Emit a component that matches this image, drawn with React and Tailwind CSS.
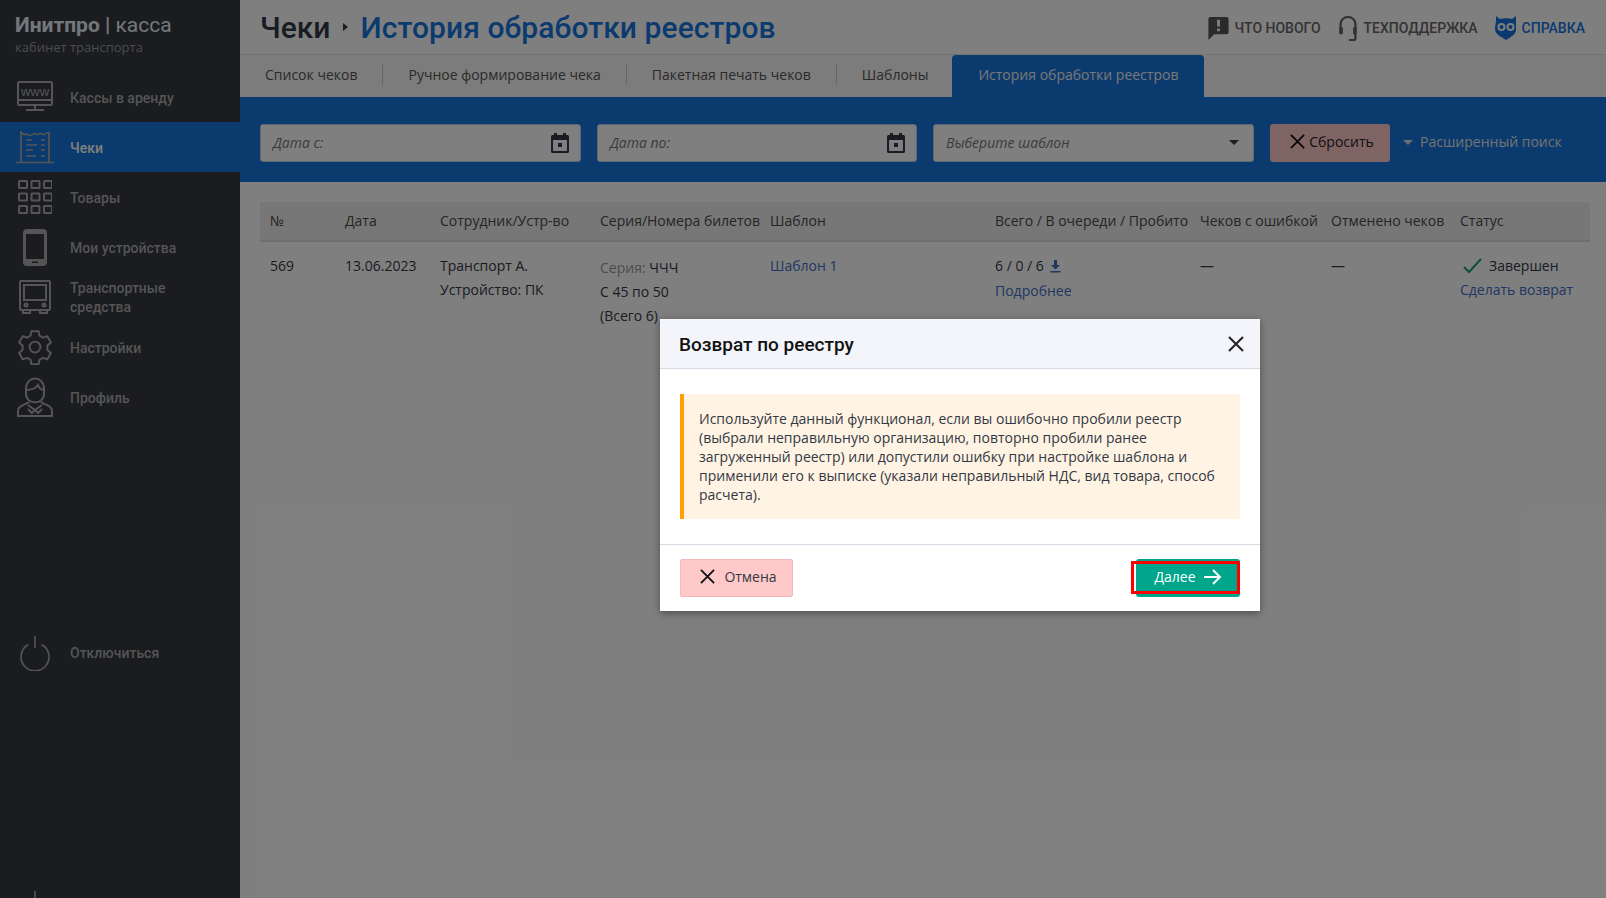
import React from "react";

const ic = { fill: "none", stroke: "#aaaaaa", strokeWidth: 2 };

const Www = () => (
  <svg width="36" height="32" viewBox="0 0 36 32" {...ic}>
    <rect x="1" y="1" width="34" height="23" rx="1" />
    <path d="M1 19h34M18 24v4M9 29h18" />
    <text x="18" y="14.500" textAnchor="middle" fontSize="13" fontFamily="'Liberation Sans',sans-serif" fill="#aaaaaa" stroke="none">www</text>
  </svg>
);
const Receipt = () => (
  <svg width="38" height="33" viewBox="0 0 38 33" fill="none" stroke="#aaaaaa" strokeWidth="1.700">
    <path d="M5 31V1c2 3 4 3 6 2 2 2 4 2 6 0s4 2 6 0 4 2 6 0 3 0 4-2v30" />
    <path d="M0 31.500h38" />
    <path d="M10 9h6M25 9h4M10 14h11M25 14h4M10 19h7M25 19h4M10 25h10M25 25h4" />
  </svg>
);
const Grid = () => (
  <svg width="34" height="34" viewBox="0 0 34 34" {...ic}>
    {[0, 12.5, 25].map((y) =>
      [0, 12.5, 25].map((x) => <rect key={`${x}-${y}`} x={x + 1} y={y + 1} width="8" height="7" rx="0.5" />)
    )}
  </svg>
);
const Phone = () => (
  <svg width="24" height="37" viewBox="0 0 24 37">
    <path fillRule="evenodd" fill="#aaaaaa" d="M4 0h16a4 4 0 0 1 4 4v29a4 4 0 0 1-4 4H4a4 4 0 0 1-4-4V4a4 4 0 0 1 4-4Zm-1 5v25h18V5ZM9 32.500v1.500h6v-1.500Z" />
  </svg>
);
const Bus = () => (
  <svg width="32" height="34" viewBox="0 0 32 34" {...ic}>
    <rect x="1" y="1" width="30" height="29" rx="1" />
    <rect x="5" y="5" width="22" height="15" />
    <circle cx="7" cy="25" r="1.500" />
    <circle cx="25" cy="25" r="1.500" />
    <path d="M4 30v3h7v-3M21 30v3h7v-3" />
  </svg>
);
const Gear = () => (
  <svg width="36" height="36" viewBox="0 0 24 24" fill="none" stroke="#aaaaaa" strokeWidth="1.300" strokeLinejoin="round">
    <path d="M9.600 1.500h4.800l.6 3 2.300 1.300 2.900-1 2.400 4.200-2.300 2v3l2.300 2-2.400 4.200-2.900-1-2.300 1.300-.6 3H9.600l-.6-3-2.300-1.300-2.900 1-2.400-4.200 2.300-2v-3l-2.300-2 2.400-4.200 2.900 1L9 4.500Z" />
    <circle cx="12" cy="12" r="3.600" />
  </svg>
);
const Person = () => (
  <svg width="36" height="40" viewBox="0 0 36 40" {...ic}>
    <path d="M9 12c0-14 18-14 18 0v5c0 11-18 11-18 0Z" />
    <path d="M9 13c5 0 10-2 12-5 1 3 3 5 6 5" />
    <path d="M12 25c-3 3-11 3-11 9v5h34v-5c0-6-8-6-11-9" />
    <path d="M11 28l7 5 7-5M18 33l-3 3-4-4M18 33l3 3 4-4" />
  </svg>
);
const Power = () => (
  <svg width="32" height="36" viewBox="0 0 32 36" fill="none" stroke="#aaaaaa" strokeWidth="1.600">
    <path d="M16 1v12M9.500 9.500a14 14 0 1 0 13 0" />
  </svg>
);
const Cal = () => (
  <svg width="18" height="20" viewBox="0 0 18 20">
    <path fillRule="evenodd" fill="#333845" d="M3 0h3v2h6V0h3v2h1.500A1.500 1.500 0 0 1 18 3.500v15a1.500 1.500 0 0 1-1.500 1.500h-15A1.500 1.500 0 0 1 0 18.500v-15A1.500 1.500 0 0 1 1.500 2H3Zm-1 7v11h14V7ZM7 10h4v4H7Z" />
  </svg>
);
const Cross = ({ s = 15, c = "#111111", w = 2 }) => (
  <svg width={s} height={s} viewBox="0 0 16 16" fill="none" stroke={c} strokeWidth={w}>
    <path d="M1 1l14 14M15 1L1 15" />
  </svg>
);

const menu = [
  ["Кассы в аренду", <Www />],
  ["Чеки", <Receipt />, true],
  ["Товары", <Grid />],
  ["Мои устройства", <Phone />],
  [<>Транспортные<br />средства</>, <Bus />],
  ["Настройки", <Gear />],
  ["Профиль", <Person />],
];

const tabs = ["Список чеков", "Ручное формирование чека", "Пакетная печать чеков", "Шаблоны"];

const cols = [
  ["№", "w-[75px]"],
  ["Дата", "w-[95px]"],
  ["Сотрудник/Устр-во", "w-[160px]"],
  ["Серия/Номера билетов", "w-[170px]"],
  ["Шаблон", "w-[225px]"],
  ["Всего / В очереди / Пробито", "w-[205px]"],
  ["Чеков с ошибкой", "w-[131px]"],
  ["Отменено чеков", "w-[129px]"],
  ["Статус", "w-[140px]"],
];

function Field({ label, icon, w = "w-[320px]" }) {
  return (
    <div className={`flex h-[38px] ${w} items-center justify-between rounded-[3px] border border-[#b9cfe8] bg-white pl-[12px] pr-[11px] italic text-[#777777]`}>
      <span>{label}</span>
      {icon}
    </div>
  );
}

export default function App() {
  return (
    <div className="relative flex h-screen overflow-hidden bg-white font-['Open_Sans',sans-serif] text-[14px] text-[#333845]">
      <aside className="flex w-[240px] shrink-0 flex-col overflow-hidden bg-[#34383f] font-['Roboto',sans-serif] font-medium text-[#aaaaaa]">
        <div className="h-[72px] shrink-0 pl-[15px] pt-[12px]">
          <div className="text-[21px] leading-[27px] font-normal text-[#e8eef5]">
            <span className="font-bold">Инитпро | </span>касса
          </div>
          <div className="mt-[-1px] font-['Open_Sans',sans-serif] text-[13px] leading-[18px] font-normal text-[#999999]">кабинет транспорта</div>
        </div>
        {menu.map(([label, icon, active], i) => (
          <div key={i} className={`flex h-[50px] shrink-0 items-center ${active ? "bg-[#1674dc] text-white" : ""}`}>
            <div className="flex w-[70px] shrink-0 justify-center">{icon}</div>
            <div className="pt-[2px] leading-[19px]">{label}</div>
          </div>
        ))}
        <div className="mt-[206px] flex h-[50px] shrink-0 items-center">
          <div className="flex w-[70px] shrink-0 justify-center"><Power /></div>
          <div>Отключиться</div>
        </div>
        <div className="mt-[205px] flex h-[50px] shrink-0 items-center">
          <div className="flex w-[70px] shrink-0 justify-center"><Power /></div>
        </div>
      </aside>

      <main className="min-w-0 flex-1">
        <header className="flex h-[55px] items-center justify-between border-b border-[#e6e6e6] pl-[20px] pr-[21px] font-['Roboto',sans-serif]">
          <div className="flex items-center text-[30px] font-medium">
            <span>Чеки</span>
            <span className="ml-[12px] mr-[13px] h-0 w-0 border-y-[4px] border-l-[5px] border-y-transparent border-l-[#333845]" />
            <span className="tracking-[0.08px] text-[#1674dc]">История обработки реестров</span>
          </div>
          <div className="flex items-center pt-[1px] text-[14px] font-medium uppercase">
            <svg width="21" height="24" viewBox="0 0 21 25" className="mr-[6px]">
              <path fillRule="evenodd" fill="#555555" d="M2 1h17a2 2 0 0 1 2 2v14a2 2 0 0 1-2 2H6l-6 6V3a2 2 0 0 1 2-2Zm7 3v7h3V4Zm0 9v3h3v-3Z" />
            </svg>
            <span className="pt-[1px] text-[#666666]">Что нового</span>
            <svg width="20" height="26" viewBox="0 0 20 28" fill="none" stroke="#666666" strokeWidth="2.500" className="ml-[17px] mr-[6px]">
              <path d="M2 15V10a8 8 0 0 1 16 0v5M18 20v5a2 2 0 0 1-2 2h-5" />
              <rect x="0.500" y="13" width="4" height="8" rx="1.500" fill="#666666" stroke="none" />
              <rect x="15.500" y="13" width="4" height="8" rx="1.500" fill="#666666" stroke="none" />
            </svg>
            <span className="pt-[1px] text-[#666666]">Техподдержка</span>
            <svg width="22" height="24" viewBox="0 0 22 24" className="ml-[17px] mr-[5px]">
              <path fill="#1674dc" d="M1 0l4 3c3-1 9-1 12 0l4-3v14c0 5-6 7-10 10C7 21 0 19 0 13 0 9 1 7 1 5Z" />
              <circle cx="6.500" cy="11" r="4" fill="#fff" /><circle cx="15.500" cy="11" r="4" fill="#fff" />
              <circle cx="6.500" cy="11" r="2" fill="#1674dc" /><circle cx="15.500" cy="11" r="2" fill="#1674dc" />
            </svg>
            <span className="pt-[1px] text-[#1674dc]">Справка</span>
          </div>
        </header>

        <nav className="flex h-[42px] items-stretch bg-[#f8f8f8]">
          {tabs.map((t, i) => (
            <div key={t} className="flex items-center pb-[3px]">
              <span className="px-[25px] text-[#555555]">{t}</span>
              {i < 3 && <span className="h-[21px] w-px bg-[#cccccc]" />}
            </div>
          ))}
          <div className="ml-[-1px] flex w-[252px] items-center justify-center rounded-t-[4px] bg-[#1674dc] pb-[3px] text-[#f0f0f0]">История обработки реестров</div>
        </nav>

        <section className="flex h-[85px] items-center bg-[#1674dc] pl-[20px] pt-[6px]">
          <Field w="w-[321px]" label="Дата с:" icon={<Cal />} />
          <div className="ml-[16px]"><Field label="Дата по:" icon={<Cal />} /></div>
          <div className="ml-[16px]">
            <Field w="w-[321px]" label="Выберите шаблон" icon={<span className="mr-[3px] h-0 w-0 border-x-[5px] border-t-[5px] border-x-transparent border-t-[#333845]" />} />
          </div>
          <button className="ml-[16px] flex h-[38px] w-[120px] items-center justify-center gap-[4px] rounded-[3px] bg-[#ffc9c9] pb-[2px] pl-[4px] text-[#222222]">
            <Cross s={15} />
            <span>Сбросить</span>
          </button>
          <span className="ml-[13px] mr-[7px] h-0 w-0 border-x-[5px] border-t-[5px] border-x-transparent border-t-[#dddddd]" />
          <span className="pb-[2px] text-[#e6e6e6]">Расширенный поиск</span>
        </section>

        <div className="pl-[20px] pr-[16px] pt-[20px]">
          <table className="w-[1330px] table-fixed border-collapse text-left">
            <thead>
              <tr className="h-[39px] border-b-2 border-[#dcdcdc] bg-[#eeeeee]">
                {cols.map(([c, w]) => (
                  <th key={c} className={`${w} pb-[2px] pl-[10px] font-normal whitespace-nowrap text-[#4a4a4a]`}>{c}</th>
                ))}
              </tr>
            </thead>
            <tbody className="align-top leading-[24px]">
              <tr>
                <td className="pl-[10px] pt-[12px]">569</td>
                <td className="pl-[10px] pt-[12px]">13.06.2023</td>
                <td className="pl-[10px] pt-[12px]">Транспорт А.<br />Устройство: ПК</td>
                <td className="pl-[10px] pt-[14px]"><span className="text-[#999999]">Серия:</span> ЧЧЧ<br />С 45 по 50<br />(Всего 6)</td>
                <td className="pl-[10px] pt-[12px] text-[#3f6fc4]">Шаблон 1</td>
                <td className="pl-[10px] pt-[12px]">
                  <div className="flex items-center gap-[6px]">6 / 0 / 6
                    <svg width="11" height="13" viewBox="0 0 11 13"><path fill="#3f6fc4" d="M4 0h3v5h3L5.500 9.500 1 5h3ZM0.500 11h10v1.500H.5Z" /></svg>
                  </div>
                  <div className="mt-[1px] text-[#3f6fc4]">Подробнее</div>
                </td>
                <td className="pl-[10px] pt-[12px]">—</td>
                <td className="pl-[10px] pt-[12px]">—</td>
                <td className="pl-[10px] pt-[12px] whitespace-nowrap">
                  <div className="flex items-center gap-[7px] pl-[3px]">
                    <svg width="19" height="16" viewBox="0 0 19 16" fill="none" stroke="#11a07f" strokeWidth="2"><path d="M1 9l5 5L18 1" /></svg>
                    Завершен
                  </div>
                  <div className="text-[#3f6fc4]">Сделать возврат</div>
                </td>
              </tr>
            </tbody>
          </table>
        </div>
      </main>

      <div className="absolute inset-0 bg-black/50" />

      <div className="absolute left-[660px] top-[319px] w-[600px] bg-white shadow-[0_2px_8px_rgba(0,0,0,0.4)]">
        <div className="flex h-[50px] items-center justify-between border-b border-[#d9d9e5] bg-[#f3f5fa] pl-[19px] pr-[16px]">
          <span className="pt-[3px] font-['Roboto',sans-serif] text-[19px] font-medium text-[#111111]">Возврат по реестру</span>
          <Cross s={16} c="#222222" />
        </div>
        <div className="border-b border-[#d9d9e5] px-[20px] pb-[25px] pt-[25px]">
          <div className="border-l-[4px] border-[#ffa000] bg-[#fff4e3] pb-[15px] pl-[15px] pr-[20px] pt-[15px] leading-[19px] text-[#333845]">
            Используйте данный функционал, если вы ошибочно пробили реестр (выбрали неправильную организацию, повторно пробили ранее загруженный реестр) или допустили ошибку при настройке шаблона и применили его к выписке (указали неправильный НДС, вид товара, способ расчета).
          </div>
        </div>
        <div className="flex h-[66px] items-center justify-between px-[20px] pb-[1px]">
          <button className="flex h-[38px] w-[113px] items-center justify-center gap-[9px] rounded-[2px] border border-[#f3b9b9] bg-[#ffc9c9] pb-[2px] pl-[4px] text-[#333845]">
            <Cross s={15} />
            Отмена
          </button>
          <button className="relative flex h-[38px] w-[104px] items-center justify-center gap-[8px] rounded-[3px] bg-[#00a68c] pb-[2px] text-white">
            Далее
            <svg width="18" height="16" viewBox="0 0 18 16" fill="none" stroke="#fff" strokeWidth="2"><path d="M0 8h16M9 1l7 7-7 7" /></svg>
            <span className="absolute bottom-[3px] left-[-5px] right-0 top-[2px] border-[3px] border-[#ff0000]" />
          </button>
        </div>
      </div>
    </div>
  );
}
